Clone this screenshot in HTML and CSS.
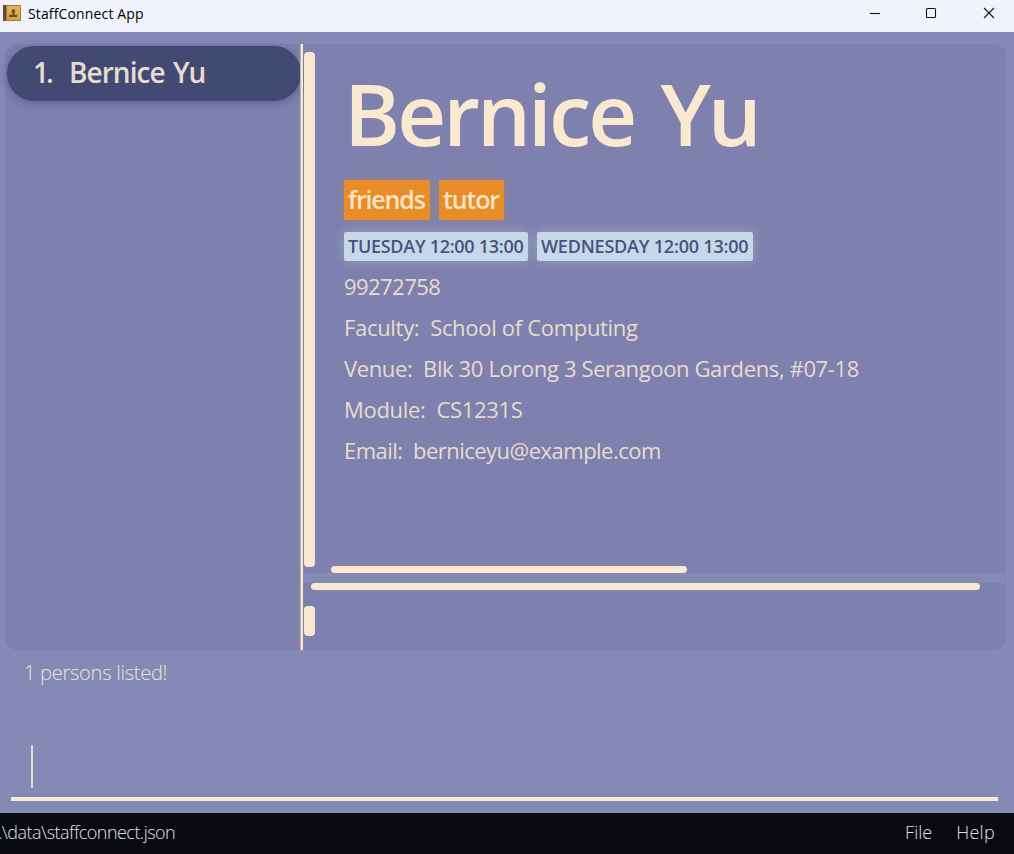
FILE: index.html
```html
<!DOCTYPE html>
<html lang="en">
<head>
<meta charset="utf-8">
<title>StaffConnect App</title>
<link rel="stylesheet" href="styles.css">
</head>
<body>
<div class="window">
  <header class="titlebar">
    <svg class="app-icon" width="18" height="17" viewBox="0 0 18 17">
      <defs><linearGradient id="cover" x1="0" y1="0" x2="0" y2="1"><stop offset="0" stop-color="#e5b45c"/><stop offset="1" stop-color="#d9a043"/></linearGradient></defs>
      <rect x="0" y="0" width="18" height="16" rx="1" fill="#a87828"/>
      <rect x="0" y="0" width="3" height="16" rx="1" fill="#5b4c48"/>
      <rect x="4" y="1" width="13" height="14" fill="url(#cover)"/>
      <path d="M8.8 4.5h3.2v3l-.8 1.2v1h3v2.3H6v-2.3h3.4v-1l-.6-1.2z" fill="#68502e"/>
    </svg>
    <span class="app-name"><span>StaffConnect App</span></span>
    <div class="controls">
      <svg width="12" height="12" viewBox="0 0 12 12"><path d="M1 6.5h10"/></svg>
      <svg width="12" height="12" viewBox="0 0 12 12"><rect x="1.5" y="1.5" width="9" height="9" rx="1"/></svg>
      <svg width="12" height="12" viewBox="0 0 12 12"><path d="M1 1l10 10M11 1L1 11"/></svg>
    </div>
  </header>
  <main class="workspace">
    <section class="panel">
      <aside class="people">
        <div class="person"><span class="index">1.</span><span class="person-name">Bernice Yu</span></div>
      </aside>
      <div class="divider"></div>
      <div class="right">
        <div class="detail">
          <div class="vtrack"><i class="vthumb"></i></div>
          <div class="card">
            <h1 class="name">Bernice Yu</h1>
            <div class="tags"><span class="tag friends">friends</span><span class="tag tutor">tutor</span></div>
            <div class="slots"><span class="slot tue">TUESDAY 12:00 13:00</span><span class="slot wed">WEDNESDAY 12:00 13:00</span></div>
            <div class="row phone">99272758</div>
            <div class="row faculty">Faculty:&nbsp; School of Computing</div>
            <div class="row venue">Venue:&nbsp; Blk 30 Lorong 3 Serangoon Gardens, #07-18</div>
            <div class="row module">Module:&nbsp; CS1231S</div>
            <div class="row email">Email:&nbsp; berniceyu@example.com</div>
            <i class="hthumb"></i>
          </div>
        </div>
        <div class="gap"></div>
        <div class="lower"><i class="hthumb-wide"></i><i class="vthumb-small"></i></div>
      </div>
    </section>
    <div class="result">1 persons listed!</div>
    <div class="command"><i class="caret"></i></div>
  </main>
  <footer class="statusbar">
    <span class="path">.\data\staffconnect.json</span>
    <nav class="menu"><span class="file">File</span><span class="help">Help</span></nav>
  </footer>
</div>
</body>
</html>
```
FILE: styles.css
```css
* { box-sizing: border-box; }
body { margin: 0; font-family: "Open Sans", "Noto Sans", sans-serif; }
.window { width: 1014px; height: 854px; display: flex; flex-direction: column; overflow: hidden; background: #8589b6; }
i { display: block; background: #f8e9d0; }

.titlebar { height: 32px; flex: none; display: flex; background: #f0f3fa; color: #000; }
.app-icon { margin: 5px 0 0 3px; flex: none; }
.app-name { margin-left: 7px; font-size: 14px; line-height: 28px; letter-spacing: 0.14px; white-space: nowrap; }
.controls { margin: 7px 19px 0 auto; display: flex; gap: 45px; }
.controls svg { fill: none; stroke: #111; stroke-width: 1.1; }
.controls svg:nth-child(2) { margin: 0 1px 0 -1px; }

.workspace { flex: 1; display: flex; flex-direction: column; padding: 12px 8px 0 5px; }
.panel { height: 606px; flex: none; display: flex; background: #7e81ad; border-radius: 12px; }
.people { width: 296px; padding: 2px 0 0 2px; flex: none; }
.person { width: 294px; height: 55px; padding-left: 26px; display: flex; border-radius: 27px; background: #424a73; color: #e7dccd; box-shadow: 0 2px 8px rgba(66, 74, 115, .55); font-size: 28px; font-weight: 600; line-height: 53px; white-space: nowrap; }
.index { width: 36px; letter-spacing: -3px; }
.person-name { letter-spacing: -0.95px; word-spacing: 2px; }
.divider { width: 2px; background: #f8e9d0; box-shadow: -1px 0 #bbb0ba; flex: none; }
.right { flex: 1; display: flex; flex-direction: column; }

.detail { height: 529px; display: flex; }
.vtrack { width: 13px; padding: 8px 0 0 1px; flex: none; }
.vthumb { width: 11.4px; height: 515.4px; border-radius: 4px; }
.card { flex: 1; display: flex; flex-direction: column; padding-left: 28px; color: #e7dccd; white-space: nowrap; }
.name { margin: 5px 0 0; height: 131px; font-size: 85px; line-height: 128px; font-weight: 600; letter-spacing: -2.9px; word-spacing: 7px; color: #f8e9d0; }
.tags { display: flex; gap: 9px; height: 52px; }
.tag { height: 40px; padding-left: 4px; border-radius: 2px; background: #e88d27; color: #f8e3c5; font-size: 25px; line-height: 39px; font-weight: 600; letter-spacing: -1.15px; box-shadow: 0 0 10px rgba(232, 141, 39, .28); }
.friends { width: 86px; }
.tutor { width: 65px; }
.slots { display: flex; gap: 9px; height: 34px; }
.slot { height: 29px; padding-left: 4px; border-radius: 2px; background: #c6d8ea; color: #48527f; font-size: 18px; line-height: 29px; font-weight: 600; box-shadow: 0 0 12px rgba(198, 216, 234, .35); }
.tue { width: 184px; letter-spacing: -0.28px; }
.wed { width: 216px; letter-spacing: -0.2px; }
.row { height: 41px; font-size: 22px; line-height: 41px; flex: none; }
.phone { letter-spacing: -0.55px; }
.faculty { letter-spacing: -0.31px; }
.venue { letter-spacing: -0.37px; }
.module { letter-spacing: -0.3px; }
.email { letter-spacing: -0.52px; }
.hthumb { width: 356px; height: 7px; margin: auto 0 0 -13px; border-radius: 4px; }
.gap { height: 10px; margin-right: 1px; background: #8589b6; }
.lower { flex: 1; }
.hthumb-wide { width: 669px; height: 7.4px; margin-left: 8px; border-radius: 4px; }
.vthumb-small { width: 11.4px; height: 30px; margin: 15.6px 0 0 1px; border-radius: 4px; }

.result { height: 46px; padding-left: 19px; color: #f1e3d2; font-size: 20px; line-height: 46px; font-weight: 300; letter-spacing: -0.25px; }
.command { height: 105px; width: 987px; margin-left: 6px; padding: 49px 0 0 20px; border-bottom: 4px solid #f8e9d0; }
.caret { width: 2px; height: 43px; background: #e8d9cb; }

.statusbar { height: 41px; flex: none; display: flex; background: #090a0f; color: #e0e0e2; font-size: 18px; line-height: 39px; font-weight: 300; white-space: nowrap; }
.path { margin-left: -2px; letter-spacing: -0.53px; }
.menu { margin: 0 19px 0 auto; display: flex; gap: 24px; }
.help { letter-spacing: 0.3px; }
```
